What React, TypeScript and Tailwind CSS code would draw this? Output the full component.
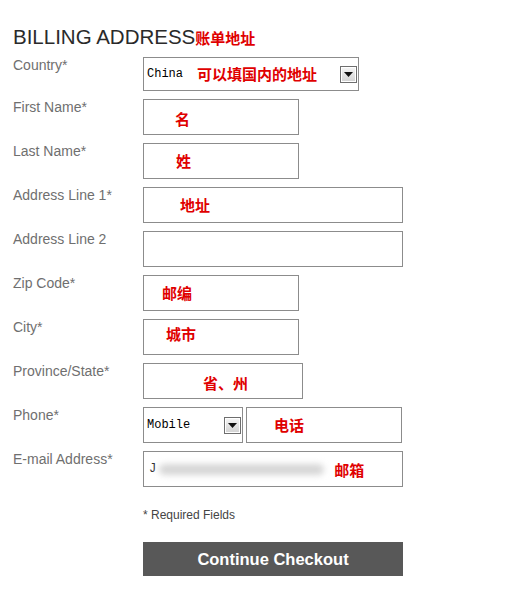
import React from 'react';

const RED = 'font-["Noto_Sans_CJK_SC",sans-serif] font-bold text-[15px] leading-[18px] text-[#e00000]';

function Arrow() {
  return (
    <span className="flex h-[17px] w-[17px] items-center justify-center border border-[#6e6e6e] bg-gradient-to-b from-[#f6f6f6] to-[#d2d2d2] shadow-[inset_0_0_0_1px_#ffffff]">
      <svg width="9" height="5" viewBox="0 0 9 5">
        <path d="M0 0h9L4.5 5z" fill="#111" />
      </svg>
    </span>
  );
}

interface RowProps {
  label: string;
  first?: boolean;
  children: React.ReactNode;
}

function Row({ label, first, children }: RowProps) {
  return (
    <div className={`flex ${first ? 'h-[34px]' : 'h-[36px]'}`}>
      <div className="w-[130px] text-[14px] leading-4 text-[#6f6f6f]">{label}</div>
      {children}
    </div>
  );
}

function Box({ width, note, pad }: { width: string; note?: string; pad?: string }) {
  return (
    <div className={`flex h-full items-center border border-[#8c8c8c] bg-white ${width}`}>
      {note && <span className={`${RED} ${pad}`}>{note}</span>}
    </div>
  );
}

export default function App() {
  return (
    <div className='min-h-[597px] w-[509px] bg-white pl-[13px] pt-[25px] font-["Liberation_Sans",Arial,sans-serif]'>
      <div className="mb-[8px] flex h-[24px] items-baseline whitespace-nowrap text-[20.5px] leading-[24px] text-[#2a2a2a]">
        BILLING ADDRESS
        <span className={RED}>账单地址</span>
      </div>

      <div className="flex flex-col gap-[8px]">
        <Row label="Country*" first>
          <div className="flex h-full w-[216px] items-center border border-[#8c8c8c] bg-white pl-[3px] pr-[1px]">
            <span className='font-["Liberation_Mono",monospace] text-[12px] text-black'>China</span>
            <span className={`${RED} ml-[14px]`}>可以填国内的地址</span>
            <span className="ml-auto mt-[1px]">
              <Arrow />
            </span>
          </div>
        </Row>
        <Row label="First Name*">
          <Box width="w-[156px]" note="名" pad="pl-[31px] pt-[4px]" />
        </Row>
        <Row label="Last Name*">
          <Box width="w-[156px]" note="姓" pad="pl-[32px]" />
        </Row>
        <Row label="Address Line 1*">
          <Box width="w-[260px]" note="地址" pad="pl-[36px]" />
        </Row>
        <Row label="Address Line 2">
          <Box width="w-[260px]" />
        </Row>
        <Row label="Zip Code*">
          <Box width="w-[156px]" note="邮编" pad="pl-[18px]" />
        </Row>
        <Row label="City*">
          <Box width="w-[156px]" note="城市" pad="pl-[22px] pb-[6px]" />
        </Row>
        <Row label="Province/State*">
          <Box width="w-[160px]" note="省、州" pad="pl-[59px] pt-[4px]" />
        </Row>
        <Row label="Phone*">
          <div className="flex h-full w-[100px] items-center border border-[#8c8c8c] bg-white pl-[3px] pr-[1px]">
            <span className='font-["Liberation_Mono",monospace] text-[12px] text-black'>Mobile</span>
            <span className="ml-auto mt-[1px]">
              <Arrow />
            </span>
          </div>
          <div className="ml-[3px] flex h-full w-[156px] items-center border border-[#8c8c8c] bg-white">
            <span className={`${RED} pl-[27px]`}>电话</span>
          </div>
        </Row>
        <Row label="E-mail Address*">
          <div className="flex h-full w-[260px] items-center border border-[#8c8c8c] bg-white pl-[5px]">
            <span className='font-["Liberation_Mono",monospace] text-[12px] text-[#333]'>J</span>
            <span className="ml-[3px] h-[11px] w-[165px] rounded-full bg-[#d6d6d6] blur-[3px]" />
            <span className={`${RED} ml-[10px] pt-[1px]`}>邮箱</span>
          </div>
        </Row>
      </div>

      <div className="ml-[130px] mt-[20px] text-[12px] leading-[16px] text-[#444]">* Required Fields</div>

      <button className="ml-[130px] mt-[19px] flex h-[34px] w-[260px] items-center justify-center bg-[#585858] text-[16.5px] font-bold text-white">
        Continue Checkout
      </button>
    </div>
  );
}
